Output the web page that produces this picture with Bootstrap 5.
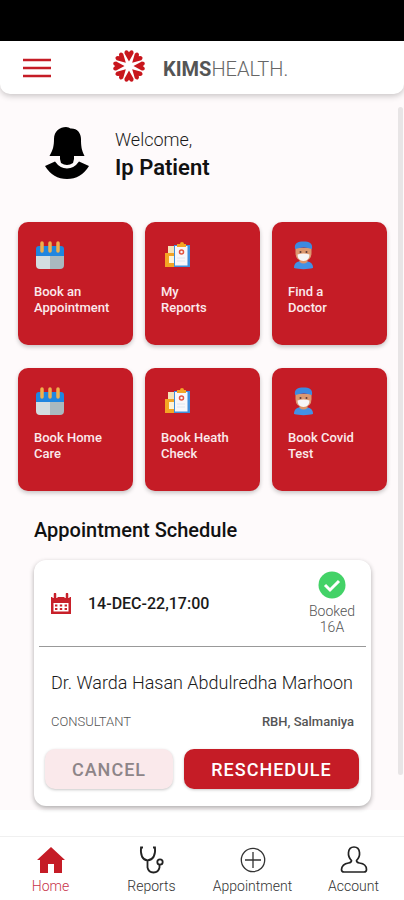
<!DOCTYPE html>
<html lang="en">
<head>
<meta charset="utf-8">
<meta name="viewport" content="width=device-width, initial-scale=1">
<title>KIMSHEALTH</title>
<link href="https://cdn.jsdelivr.net/npm/bootstrap@5.3.0/dist/css/bootstrap.min.css" rel="stylesheet">
<style>
  :root { --kims-red: #c51c26; }
  body { font-family: Roboto, "Liberation Sans", sans-serif; color: #1a1a1a; background: #fff; }
  .status-strip { height: 41px; }
  .canvas { background: #fefafb; }
  .topbar { height: 53px; padding: 0 23px; border-radius: 0 0 10px 10px; box-shadow: 0 2px 6px rgba(0,0,0,.22); }
  .brand-mark { margin: 0 18px 4px 62px; }
  .brand-name { font-size: 20px; line-height: 24px; padding-top: 2px; color: #666; font-weight: 300; }
  .brand-name b { font-weight: 700; color: #555; }
  .welcome { padding: 33px 45px 0; gap: 26px; }
  .hello { font-size: 18px; line-height: 26px; font-weight: 300; }
  .who { font-size: 22px; line-height: 30px; font-weight: 600; color: #111; }
  .tiles { padding: 39px 17px 0 18px; row-gap: 23px; column-gap: 12px; display: grid; grid-template-columns: repeat(3, minmax(0, 1fr)); }
  .tile { height: 123px; padding: 17px 0 0 16px; border-radius: 10px; background: var(--kims-red); color: #fbeaec; font-size: 13px; line-height: 16px; font-weight: 500; box-shadow: 0 2px 4px rgba(0,0,0,.22); }
  .tile svg { margin-bottom: 13px; }
  .section-title { font-size: 20px; line-height: 26px; font-weight: 500; padding: 26px 34px 0; color: #111; }
  .visit { margin: 17px 33px 4px 34px; border-radius: 12px; box-shadow: 0 2px 5px rgba(0,0,0,.32); }
  .visit-top { height: 86px; padding: 11px 16px 0; }
  .when { font-size: 16px; font-weight: 500; gap: 16px; padding-bottom: 9px; }
  .state { font-size: 14px; line-height: 16px; font-weight: 300; color: #555; }
  .rule { margin: 0 5px; border-top: 1px solid #999; }
  .doctor { font-size: 18px; line-height: 24px; font-weight: 300; padding: 24px 10px 0 17px; }
  .meta { font-size: 13px; line-height: 20px; padding: 17px 17px 0; color: #555; }
  .acts { padding: 17px 12px 17px 11px; gap: 11px; }
  .acts .btn { height: 40px; padding: 0; border: 0; border-radius: 10px; font-size: 18px; font-weight: 500; letter-spacing: 1px; box-shadow: 0 1px 3px rgba(0,0,0,.22); }
  .act-cancel { flex: 128 1 0; background: #fae9eb; color: #8d8588; }
  .act-move { flex: 175 1 0; background: var(--kims-red); color: #fff; }
  .track { right: 1px; top: 107px; bottom: 125px; width: 5px; border-radius: 3px; background: #e8e5e6; }
  .tabs { margin-top: 26px; border-top: 1px solid #f0f0f0; padding: 9px 0 4px; }
  .tab { font-size: 14px; line-height: 20px; font-weight: 300; color: #333; gap: 2px; }
  .tab.active { color: #c8324a; }
</style>
<script src="https://cdn.jsdelivr.net/npm/bootstrap@5.3.0/dist/js/bootstrap.bundle.min.js"></script>
</head>
<body class="d-flex flex-column min-vh-100 position-relative">
<svg width="0" height="0" class="position-absolute" aria-hidden="true">
  <symbol id="i-cal" viewBox="0 0 32 32">
    <path d="M2 10q0-3 3-3h22q3 0 3 3v9H2z" fill="#1f86e0"/>
    <path d="M2 17h14v13H6a4 4 0 0 1-4-4z" fill="#d3dde0"/><path d="M16 17h14v9a4 4 0 0 1-4 4H16z" fill="#a9b9bf"/>
    <path d="M8 4v8M16 4v8M24 4v8" stroke="#f0b04c" stroke-width="3.500" stroke-linecap="round"/>
  </symbol>
  <symbol id="i-rep" viewBox="0 0 32 32">
    <path d="M7 7h9v20H7z" fill="#f6e3b7"/><path d="M4 14h9v14H4z" fill="#f4a524"/><path d="M8 17h6v7H8z" fill="#fff4d8"/>
    <path d="M13 6h16v22H13z" fill="#3f8fdc"/><path d="M14 7h12.500v19.500H14z" fill="#f8f7fa"/>
    <path d="M16 8V5h3a2 2 0 0 1 4 0h2v3z" fill="#f4a524"/>
    <circle cx="20.500" cy="13" r="2" fill="none" stroke="#e2533f" stroke-width="1.500"/><path d="M16 19h8M16 22h8" stroke="#dfe6ee"/>
  </symbol>
  <symbol id="i-doc" viewBox="0 0 32 32">
    <path d="M6 29c0-5 3-6 6-7h6c4 1 7 2 7 7-5 1.500-14 1.500-19 0z" fill="#4291e5"/>
    <path d="M11.500 18h8v5q-4 3-8 0z" fill="#dd9367"/>
    <path d="M7.500 9h16v5q0 8-8 8t-8-8z" fill="#dc9870"/><path d="M7 10C6 4 10 2.500 15.500 2.500S25 4 24 10q-8-3-17 0z" fill="#3d8ae0"/>
    <circle cx="12.500" cy="13" r="1" fill="#593a38"/><circle cx="18.500" cy="13" r="1" fill="#593a38"/>
    <path d="M9.500 15.500q6-2 12 0 0 6.500-6 6.500t-6-6.500z" fill="#f6f5f8"/>
  </symbol>
</svg>

<div class="status-strip bg-black"></div>
<div class="canvas">
  <header class="topbar bg-white d-flex align-items-center">
    <button type="button" class="btn p-0 border-0 d-flex" aria-label="Menu">
      <svg width="28" height="20" viewBox="0 0 28 20" stroke="#c51c26" stroke-width="2.4"><path d="M0 2h28M0 10h28M0 18h28"/></svg>
    </button>
    <svg class="brand-mark" width="32" height="32" viewBox="-16 -16 32 32" fill="#c8161d" aria-hidden="true">
      <defs><path id="heart" d="M0-4.500L-4.600-12.800Q-4.600-15.800-2.600-15.800-1-15.800 0-13.800 1-15.800 2.600-15.800 4.600-15.800 4.600-12.800Z"/></defs>
      <use href="#heart"/><use href="#heart" transform="rotate(45)"/><use href="#heart" transform="rotate(90)"/><use href="#heart" transform="rotate(135)"/><use href="#heart" transform="rotate(180)"/><use href="#heart" transform="rotate(225)"/><use href="#heart" transform="rotate(270)"/><use href="#heart" transform="rotate(315)"/>
    </svg>
    <div class="brand-name"><b>KIMS</b>HEALTH.</div>
  </header>

  <main>
    <section class="welcome d-flex">
      <svg width="44" height="52" viewBox="0 0 44 52" aria-hidden="true">
        <path d="M9 12C9 4 15 0 21 0q3 0 4.500 1.500C32 1 36 6 36 12c0 7 .500 11 3.500 17H29v3l-1 4q-6 4-12 0l-1-4v-3H4.500C8 23 9 19 9 12z"/>
        <path d="M0 39l10-4.500Q15 41.500 22 41.500T34 34.500L44 39Q36 52 22 52T0 39z"/>
      </svg>
      <div><div class="hello">Welcome,</div><div class="who">Ip Patient</div></div>
    </section>

    <section class="tiles">
      <a href="#" class="tile text-decoration-none"><svg class="d-block" width="32" height="32"><use href="#i-cal"/></svg>Book an<br>Appointment</a>
      <a href="#" class="tile text-decoration-none"><svg class="d-block" width="32" height="32"><use href="#i-rep"/></svg>My<br>Reports</a>
      <a href="#" class="tile text-decoration-none"><svg class="d-block" width="32" height="32"><use href="#i-doc"/></svg>Find a<br>Doctor</a>
      <a href="#" class="tile text-decoration-none"><svg class="d-block" width="32" height="32"><use href="#i-cal"/></svg>Book Home<br>Care</a>
      <a href="#" class="tile text-decoration-none"><svg class="d-block" width="32" height="32"><use href="#i-rep"/></svg>Book Heath<br>Check</a>
      <a href="#" class="tile text-decoration-none"><svg class="d-block" width="32" height="32"><use href="#i-doc"/></svg>Book Covid<br>Test</a>
    </section>

    <h1 class="section-title m-0">Appointment Schedule</h1>

    <section class="visit bg-white">
      <div class="visit-top d-flex justify-content-between">
        <div class="when d-flex align-items-center">
          <svg width="22" height="22" viewBox="0 0 22 22" aria-hidden="true">
            <path d="M1 4h20v17H1z" fill="#c8202a"/>
            <path d="M3.500 10h15v8.500h-15z" fill="#fff"/>
            <path d="M5 1v4M17 1v4" stroke="#fff" stroke-width="5"/><path d="M5 1v4M17 1v4" stroke="#c8202a" stroke-width="2.500" stroke-linecap="round"/>
            <path d="M5 12.500h12M5 16h12" stroke="#c8202a" stroke-width="2" stroke-dasharray="2.400"/>
          </svg>
          <span>14-DEC-22,17:00</span>
        </div>
        <div class="state text-center">
          <svg class="d-block mx-auto mb-1" width="28" height="28" viewBox="0 0 28 28" aria-hidden="true"><circle cx="14" cy="14" r="13.500" fill="#43d267"/><path d="M7 14l5 5 9-9" fill="none" stroke="#fff" stroke-width="3"/></svg>
          Booked<br>16A
        </div>
      </div>
      <div class="rule"></div>
      <div class="doctor text-nowrap">Dr. Warda Hasan Abdulredha Marhoon</div>
      <div class="meta d-flex justify-content-between"><span class="fw-light">CONSULTANT</span><span class="fw-medium">RBH, Salmaniya</span></div>
      <div class="acts d-flex">
        <button type="button" class="btn act-cancel">CANCEL</button>
        <button type="button" class="btn act-move">RESCHEDULE</button>
      </div>
    </section>
  </main>
</div>
<div class="track position-absolute"></div>

<nav class="tabs row row-cols-4 g-0 text-center">
  <a href="#" class="tab active col d-flex flex-column align-items-center text-decoration-none">
    <svg width="28" height="28" viewBox="0 0 28 28" fill="#c51c26"><path d="M14 1l14 13h-3v13h-8v-9h-6v9H3V14H0z"/></svg>Home</a>
  <a href="#" class="tab col d-flex flex-column align-items-center text-decoration-none">
    <svg width="28" height="28" viewBox="0 0 28 28" fill="none" stroke="#222" stroke-width="1.800"><path d="M5 1.500H3q-1 12 6.500 13Q18 13.500 17 1.500h-2M9.500 14.500v7q1 5 6 5t6-5V19"/><circle cx="22" cy="16" r="2.700"/></svg>Reports</a>
  <a href="#" class="tab col d-flex flex-column align-items-center text-decoration-none">
    <svg width="28" height="28" viewBox="0 0 28 28" fill="none" stroke="#333" stroke-width="1.300"><circle cx="14" cy="14" r="11.700"/><path d="M14 6v16M6 14h16"/></svg>Appointment</a>
  <a href="#" class="tab col d-flex flex-column align-items-center text-decoration-none">
    <svg width="28" height="28" viewBox="0 0 28 28" fill="none" stroke="#222" stroke-width="1.700"><path d="M11.500 14.500Q8 11 8.500 6.500 9 1 14 1t5.500 5.500q.5 4.500-3 8 0 2 3 2.500 7 1 7 6.500 0 2.500-2.500 2.500H4q-2.500 0-2.500-2.500Q2 18 8.500 17q3-.5 3-2.500z"/></svg>Account</a>
</nav>
</body>
</html>
